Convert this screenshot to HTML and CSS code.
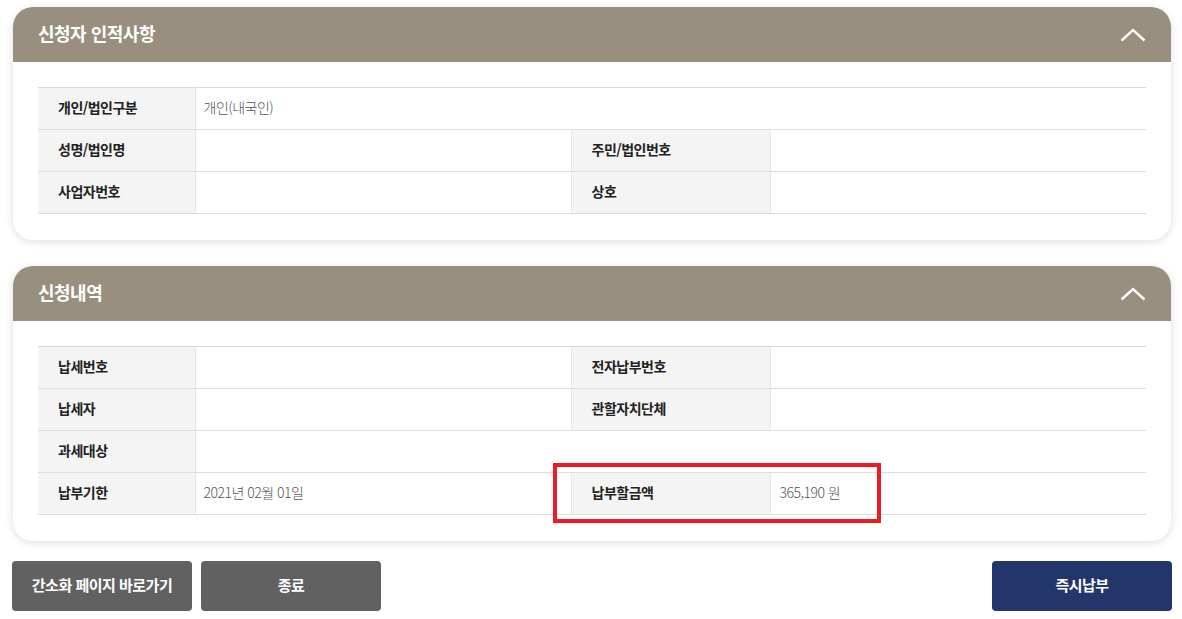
FILE: index.html
```html
<!DOCTYPE html>
<html lang="ko">
<head>
  <meta charset="UTF-8" />
  <meta name="viewport" content="width=device-width, initial-scale=1.0"/>
  <title>신청내역</title>
  <link rel="stylesheet" href="styles.css">
</head>
<body>

  <div class="wrap">
    <div class="card">
      <div class="card-head">
        <h2>신청자 인적사항</h2>
        <svg class="toggle" width="26" height="14" viewBox="0 0 26 14"><polyline points="1.5,12.5 13,2 24.5,12.5" fill="none" stroke="#fff" stroke-width="2.4"/></svg>
      </div>
      <div class="card-body">
        <table class="info">
          <colgroup>
            <col style="width:157px"><col style="width:376px"><col style="width:199px"><col>
          </colgroup>
          <tr>
            <th>개인/법인구분</th>
            <td colspan="3">개인(내국인)</td>
          </tr>
          <tr>
            <th>성명/법인명</th>
            <td></td>
            <th>주민/법인번호</th>
            <td></td>
          </tr>
          <tr>
            <th>사업자번호</th>
            <td></td>
            <th>상호</th>
            <td></td>
          </tr>
        </table>
      </div>
    </div>

    <div class="card">
      <div class="card-head">
        <h2>신청내역</h2>
        <svg class="toggle" width="26" height="14" viewBox="0 0 26 14"><polyline points="1.5,12.5 13,2 24.5,12.5" fill="none" stroke="#fff" stroke-width="2.4"/></svg>
      </div>
      <div class="card-body">
        <table class="info">
          <colgroup>
            <col style="width:157px"><col style="width:376px"><col style="width:199px"><col>
          </colgroup>
          <tr>
            <th>납세번호</th>
            <td></td>
            <th>전자납부번호</th>
            <td></td>
          </tr>
          <tr>
            <th>납세자</th>
            <td></td>
            <th>관할자치단체</th>
            <td></td>
          </tr>
          <tr>
            <th>과세대상</th>
            <td colspan="3"></td>
          </tr>
          <tr>
            <th>납부기한</th>
            <td>2021년 02월 01일</td>
            <th class="marked">납부할금액<span class="mark"></span></th>
            <td class="amount">365,190 원</td>
          </tr>
        </table>
      </div>
    </div>

    <div class="actions">
      <div class="left">
        <button class="btn gray">간소화 페이지 바로가기</button>
        <button class="btn gray">종료</button>
      </div>
      <button class="btn navy">즉시납부</button>
    </div>
  </div>

</body>
</html>
```

FILE: styles.css
```css
* {
  box-sizing: border-box;
}
body {
  margin: 0;
  padding: 7px 10px 0 12px;
  background: #fff;
  font-family: "Noto Sans CJK KR", "Noto Sans", sans-serif;
  color: #222;
}

.wrap {
  width: 1160px;
}

.card {
  margin: 0 1px 26px;
  background: #fff;
  border-radius: 20px;
  box-shadow: 0 2px 8px rgba(0, 0, 0, 0.13);
  overflow: hidden;
}

.card-head {
  height: 55px;
  background: #998f7e;
  display: flex;
  align-items: center;
  justify-content: space-between;
  padding: 0 25px 0 25px;
}

.card-head h2 {
  margin: 0 0 3px;
  font-size: 18px;
  font-weight: bold;
  color: #fff;
  letter-spacing: -0.5px;
}

.toggle {
  display: block;
  margin-top: 0;
}

.card-body {
  padding: 25px 25px 26px;
}

.info {
  width: 100%;
  border-collapse: collapse;
  table-layout: fixed;
  border-top: 1px solid #d9d9d9;
}

.info th,
.info td {
  height: 42px;
  border-bottom: 1px solid #dedede;
  font-size: 14px;
  text-align: left;
  letter-spacing: -0.5px;
}

.info th {
  background: #f4f4f4;
  padding: 0 0 4px 20px;
  font-weight: bold;
  color: #222;
  border-left: 1px solid #e6e6e6;
  border-right: 1px solid #e6e6e6;
}

.info th:first-child {
  border-left: none;
}

.info td {
  padding: 0 0 4px 8px;
  color: #555;
  font-weight: 300;
}

.info td.amount {
  padding-left: 9px;
}

.marked {
  position: relative;
}

.mark {
  position: absolute;
  left: -19px;
  top: -10px;
  width: 328px;
  height: 60px;
  border: 4px solid #ed1c24;
}

.actions {
  display: flex;
  justify-content: space-between;
  margin-top: -6px;
}

.actions .left {
  display: flex;
  gap: 9px;
}

.btn {
  width: 180px;
  height: 50px;
  border: none;
  border-radius: 4px;
  padding: 0 0 4px;
  font-family: inherit;
  font-size: 15px;
  font-weight: bold;
  color: #fff;
  letter-spacing: -0.5px;
}

.btn.gray {
  background: #616161;
}

.btn.navy {
  background: #22366b;
}
```
